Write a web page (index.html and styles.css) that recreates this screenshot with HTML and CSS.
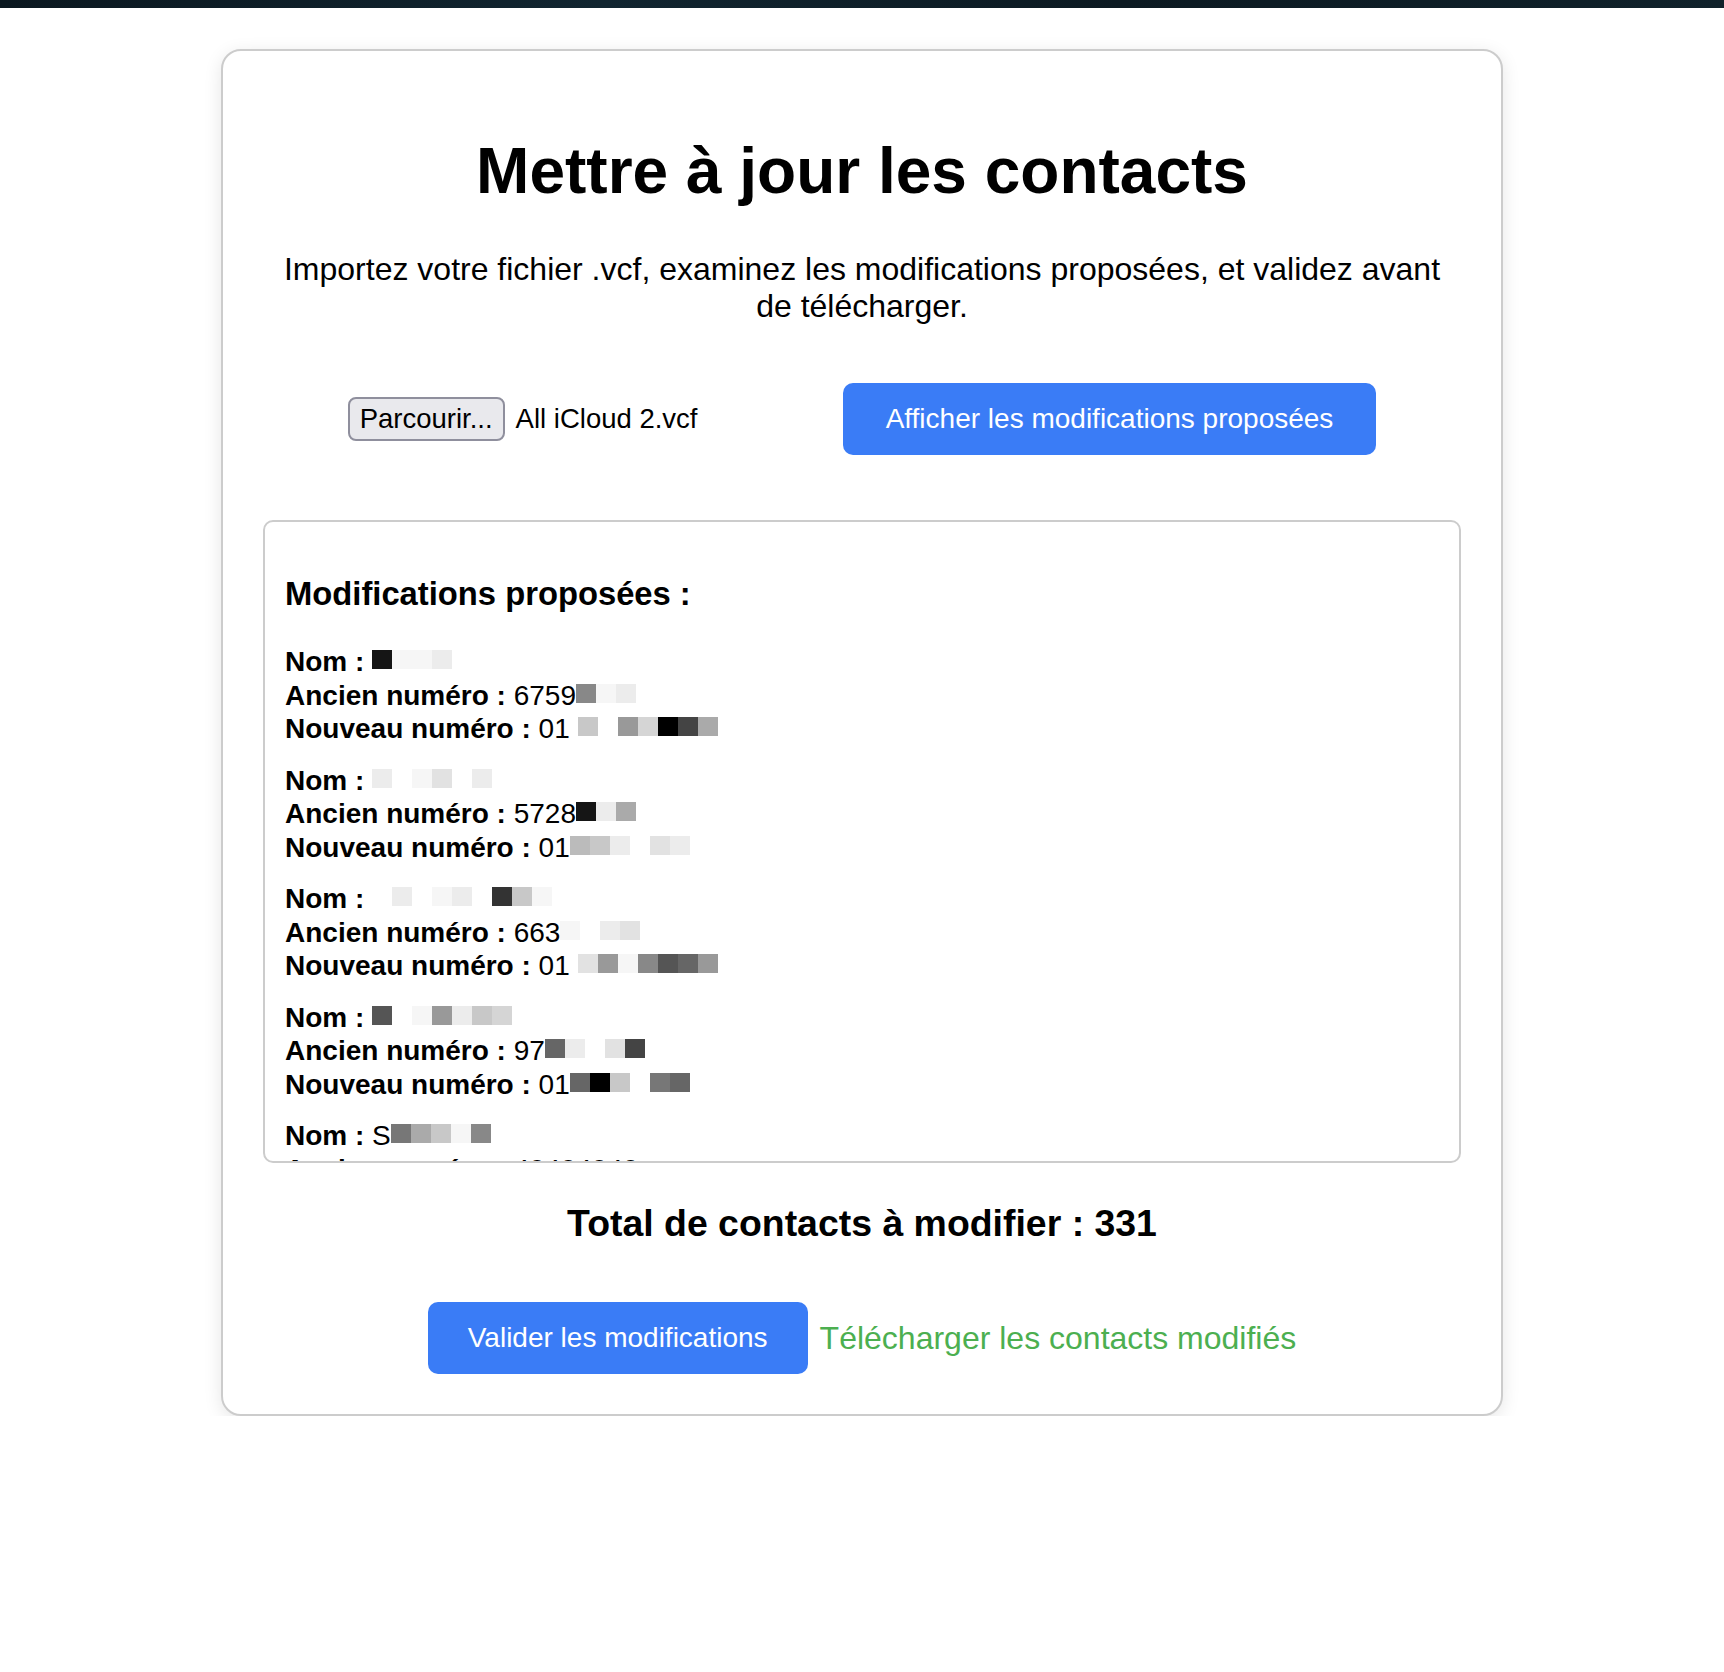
FILE: index.html
```html
<!DOCTYPE html>
<html lang="fr">
<head>
<meta charset="utf-8">
<title>Mettre à jour les contacts</title>
<link rel="stylesheet" href="styles.css">
</head>
<body>
<div class="topbar"></div>
<main class="card">
  <h1 class="title">Mettre à jour les contacts</h1>
  <p class="intro">Importez votre fichier .vcf, examinez les modifications proposées, et validez avant de télécharger.</p>

  <div class="upload-row">
    <div class="file-input">
      <button class="file-btn" type="button">Parcourir...</button>
      <span class="file-name">All iCloud 2.vcf</span>
    </div>
    <button class="btn-primary btn-show" type="button">Afficher les modifications proposées</button>
  </div>

  <section class="changes">
    <h3 class="changes-title">Modifications proposées :</h3>

    <div class="entry">
      <div><b>Nom :</b> <span class="px s1"></span><span class="px sf"></span><span class="px sf"></span><span class="px se"></span></div>
      <div><b>Ancien numéro :</b> 6759<span class="px s7"></span><span class="px sf"></span><span class="px se"></span></div>
      <div><b>Nouveau numéro :</b> 01 <span class="px sb"></span><span class="px sw"></span><span class="px s8"></span><span class="px sc"></span><span class="px s0"></span><span class="px s3"></span><span class="px s9"></span></div>
    </div>

    <div class="entry">
      <div><b>Nom :</b> <span class="px se"></span><span class="px sw"></span><span class="px sf"></span><span class="px sd"></span><span class="px sw"></span><span class="px se"></span></div>
      <div><b>Ancien numéro :</b> 5728<span class="px s1"></span><span class="px se"></span><span class="px s9"></span></div>
      <div><b>Nouveau numéro :</b> 01<span class="px sa"></span><span class="px sb"></span><span class="px se"></span><span class="px sw"></span><span class="px sd"></span><span class="px se"></span></div>
    </div>

    <div class="entry">
      <div><b>Nom :</b> <span class="px sw"></span><span class="px se"></span><span class="px sw"></span><span class="px sf"></span><span class="px se"></span><span class="px sw"></span><span class="px s2"></span><span class="px sb"></span><span class="px sf"></span></div>
      <div><b>Ancien numéro :</b> 663<span class="px sf"></span><span class="px sw"></span><span class="px se"></span><span class="px sd"></span></div>
      <div><b>Nouveau numéro :</b> 01 <span class="px sd"></span><span class="px s8"></span><span class="px sf"></span><span class="px s7"></span><span class="px s4"></span><span class="px s5"></span><span class="px s8"></span></div>
    </div>

    <div class="entry">
      <div><b>Nom :</b> <span class="px s4"></span><span class="px sw"></span><span class="px sf"></span><span class="px s8"></span><span class="px se"></span><span class="px sb"></span><span class="px sc"></span></div>
      <div><b>Ancien numéro :</b> 97<span class="px s5"></span><span class="px se"></span><span class="px sw"></span><span class="px sd"></span><span class="px s3"></span></div>
      <div><b>Nouveau numéro :</b> 01<span class="px s5"></span><span class="px s0"></span><span class="px sb"></span><span class="px sw"></span><span class="px s6"></span><span class="px s5"></span></div>
    </div>

    <div class="entry">
      <div><b>Nom :</b> S<span class="px s6"></span><span class="px s9"></span><span class="px sb"></span><span class="px sf"></span><span class="px s7"></span></div>
      <div><b>Ancien numéro :</b> 40404040</div>
      <div><b>Nouveau numéro :</b> 01 40 40 40 40</div>
    </div>

    <div class="entry">
      <div><b>Nom :</b> <span class="px s7"></span><span class="px sd"></span><span class="px sb"></span></div>
      <div><b>Ancien numéro :</b> 6123<span class="px s8"></span><span class="px se"></span></div>
      <div><b>Nouveau numéro :</b> 01 <span class="px sc"></span><span class="px s5"></span></div>
    </div>
  </section>

  <h3 class="total">Total de contacts à modifier : 331</h3>

  <div class="actions">
    <button class="btn-primary" type="button">Valider les modifications</button>
    <a class="download" href="#">Télécharger les contacts modifiés</a>
  </div>
</main>
</body>
</html>
```

FILE: styles.css
```css
* {
  box-sizing: border-box;
}

body {
  margin: 0;
  background: #ffffff;
  color: #000000;
  font-family: "Liberation Sans", Arial, Helvetica, sans-serif;
}

.topbar {
  height: 8px;
  background: linear-gradient(90deg, #0b1820 0%, #112530 35%, #0c1a22 65%, #10222b 100%);
}

.card {
  width: 1282px;
  margin: 41px auto 0;
  padding: 40px;
  border: 2px solid #cccccc;
  border-radius: 20px;
  background: #ffffff;
  box-shadow: 0 4px 18px rgba(0, 0, 0, 0.1);
  text-align: center;
}

.title {
  font-size: 64px;
  font-weight: 700;
  margin: 42.9px 0;
}

.intro {
  font-size: 32px;
  margin: 32px 0;
}

.upload-row {
  display: flex;
  justify-content: center;
  align-items: center;
  margin: 58px 0 65px;
}

.file-input {
  width: 495px;
  display: flex;
  align-items: center;
}

.file-btn {
  height: 44px;
  padding: 0 10px;
  border: 2px solid #8f8f9d;
  border-radius: 8px;
  background: #e9e9ed;
  color: #000000;
  font-family: "Liberation Sans", Arial, Helvetica, sans-serif;
  font-size: 27.5px;
}

.file-name {
  margin-left: 11px;
  font-size: 27.5px;
}

.btn-primary {
  padding: 20px 40px;
  border: 0;
  border-radius: 10px;
  background: #3a7cf6;
  color: #ffffff;
  font-family: "Liberation Sans", Arial, Helvetica, sans-serif;
  font-size: 28px;
  line-height: 32px;
}

.btn-show {
  padding-left: 43px;
  padding-right: 43px;
}

.changes {
  height: 643px;
  padding: 20px;
  border: 2px solid #cccccc;
  border-radius: 10px;
  overflow: hidden;
  text-align: left;
}

.changes-title {
  font-size: 32.76px;
  font-weight: 700;
  margin: 32.76px 0;
}

.entry {
  font-size: 28px;
  line-height: 33.5px;
  margin-bottom: 18px;
}

.px {
  display: inline-block;
  width: 20px;
  height: 19px;
  margin-bottom: 2px;
  vertical-align: baseline;
}

.s0 { background: #000000; }
.s1 { background: #151515; }
.s2 { background: #333333; }
.s3 { background: #444444; }
.s4 { background: #555555; }
.s5 { background: #666666; }
.s6 { background: #777777; }
.s7 { background: #888888; }
.s8 { background: #999999; }
.s9 { background: #aaaaaa; }
.sa { background: #bbbbbb; }
.sb { background: #c8c8c8; }
.sc { background: #d5d5d5; }
.sd { background: #e2e2e2; }
.se { background: #ececec; }
.sf { background: #f6f6f6; }
.sw { background: transparent; }

.total {
  font-size: 37.44px;
  font-weight: 700;
  margin: 39.5px 0 37.44px;
}

.actions {
  display: flex;
  justify-content: center;
  align-items: center;
  gap: 12px;
  margin-top: 57px;
}

.download {
  color: #4caf50;
  font-size: 32px;
  text-decoration: none;
}
```
